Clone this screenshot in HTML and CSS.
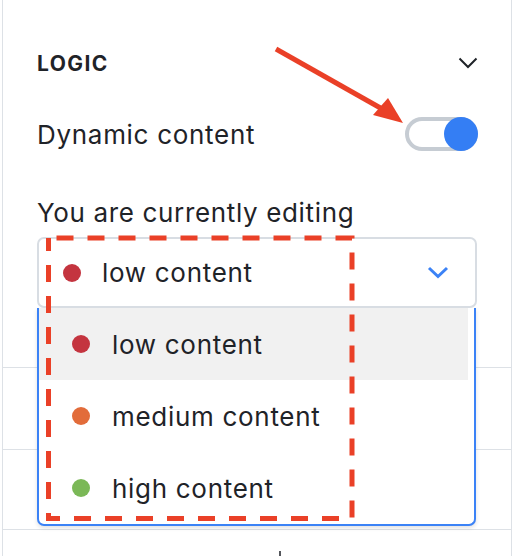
FILE: index.html
```html
<!DOCTYPE html>
<html>
	<head>
		<meta charset="utf-8">
		<title>Logic panel</title>
		<link rel="stylesheet" href="styles.css">
	</head>
	<body>
		<section class="panel">
			<div class="panel-head">
				<h2 class="panel-title">LOGIC</h2>
				<svg class="chevron" width="20" height="12" viewBox="0 0 20 12">
					<path d="M1.5 1.5 L10 10 L18.5 1.5" fill="none" stroke="#1f2328" stroke-width="2"/>
				</svg>
			</div>

			<div class="setting">
				<span class="setting-label">Dynamic content</span>
				<span class="toggle"><span class="toggle-knob"></span></span>
			</div>

			<p class="field-label">You are currently editing</p>

			<div class="select">
				<span class="dot dot-low"></span>
				<span class="select-value">low content</span>
				<svg class="select-arrow" width="22" height="13" viewBox="0 0 22 13">
					<path d="M2 2 L11 10.5 L20 2" fill="none" stroke="#3b82f6" stroke-width="3"/>
				</svg>
			</div>

			<ul class="options">
				<li class="option active"><span class="dot dot-low"></span>low content</li>
				<li class="option"><span class="dot dot-medium"></span>medium content</li>
				<li class="option"><span class="dot dot-high"></span>high content</li>
			</ul>

			<div class="rows">
				<div class="row"></div>
				<div class="row row-mid"></div>
				<div class="row row-last"><span class="caret"></span></div>
			</div>

			<!-- annotation -->
			<svg class="markup" width="514" height="556" viewBox="0 0 514 556">
				<line x1="276" y1="49" x2="384" y2="110" stroke="#ea4027" stroke-width="5"/>
				<polygon points="373,115 388,98 403,123" fill="#ea4027"/>
				<rect x="48.5" y="238" width="303.5" height="280.5" fill="none" stroke="#ea4027" stroke-width="5" stroke-dasharray="17 14" stroke-dashoffset="-8"/>
			</svg>
		</section>
	</body>
</html>
```

FILE: styles.css
```css
body {
	margin: 0;
	font-family: Inter, "Noto Sans", sans-serif;
	color: #1f2328;
	background: #fff;
}

.panel {
	position: relative;
	margin-left: 2px;
	width: 510px;
	height: 556px;
	padding: 44px 33px 0 34px;
	box-sizing: border-box;
	border-left: 1px solid #dde1e6;
	border-right: 1px solid #dde1e6;
	overflow: hidden;
}

.panel-head {
	display: flex;
	align-items: center;
	justify-content: space-between;
	height: 38px;
}

.panel-title {
	margin: 0;
	font-size: 21px;
	font-weight: 700;
	letter-spacing: 1.4px;
}

.chevron {
	display: block;
}

.setting {
	display: flex;
	align-items: center;
	justify-content: space-between;
	height: 34px;
	margin-top: 35px;
}

.setting-label {
	font-size: 26px;
	letter-spacing: 0.7px;
}

.toggle {
	position: relative;
	width: 73px;
	height: 34px;
	box-sizing: border-box;
	border: 4px solid #c6ccd3;
	border-radius: 17px;
}

.toggle-knob {
	position: absolute;
	right: -4px;
	top: -4px;
	width: 34px;
	height: 34px;
	border-radius: 50%;
	background: #347ef4;
}

.field-label {
	margin: 46px 0 0;
	font-size: 26px;
	line-height: 32px;
	letter-spacing: 0.65px;
}

.select {
	position: relative;
	z-index: 2;
	display: flex;
	align-items: center;
	width: 440px;
	height: 71px;
	margin-top: 8px;
	padding: 0 26px 0 24px;
	box-sizing: border-box;
	border: 2px solid #d8dde3;
	border-radius: 7px;
	background: #fff;
}

.select-value {
	flex: 1;
	margin-left: 21px;
	font-size: 26px;
	letter-spacing: 0.7px;
}

.select-arrow {
	display: block;
}

.dot {
	display: inline-block;
	width: 18px;
	height: 18px;
	border-radius: 50%;
	flex-shrink: 0;
}

.dot-low {
	background: #c4343f;
}

.dot-medium {
	background: #e26c3a;
}

.dot-high {
	background: #7bb857;
}

.options {
	position: absolute;
	z-index: 1;
	left: 34px;
	top: 308px;
	width: 439px;
	margin: 0;
	padding: 0 6px 0 0;
	box-sizing: border-box;
	list-style: none;
	border: 2px solid #3b82f6;
	border-top: none;
	border-radius: 0 0 7px 7px;
	background: #fff;
	box-shadow: 0 2px 4px rgba(0, 0, 0, 0.12);
}

.option {
	display: flex;
	align-items: center;
	height: 72px;
	padding-left: 33px;
	font-size: 26px;
	letter-spacing: 0.7px;
}

.option .dot {
	margin-right: 22px;
}

.option.active {
	background: #f1f1f1;
}

.rows {
	margin: 59px -33px 0 -34px;
}

.row {
	height: 81px;
	border-top: 1px solid #dde1e6;
}

.row-mid {
	height: 79px;
}

.row-last {
	position: relative;
}

.caret {
	position: absolute;
	left: 276px;
	top: 21px;
	width: 2px;
	height: 8px;
	background: #55575c;
}

.markup {
	position: absolute;
	left: -3px;
	top: 0;
	z-index: 3;
	pointer-events: none;
}
```
